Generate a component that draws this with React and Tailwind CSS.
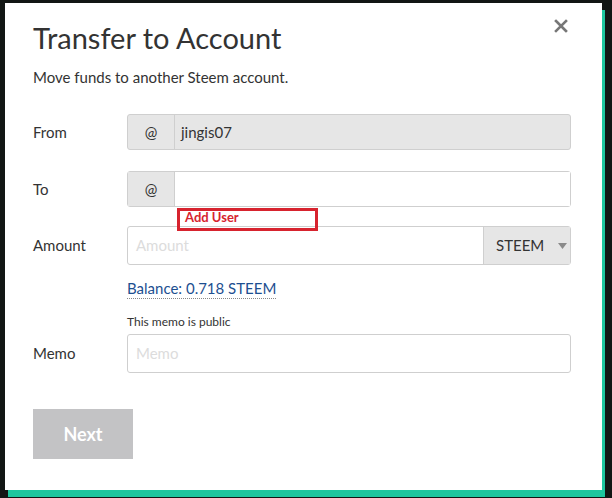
import React from 'react';

const font = { fontFamily: '"Lato", "Open Sans", sans-serif' };

function Row({ label, children, className = '' }) {
  return (
    <div className={`flex items-center ${className}`}>
      <div className="w-[94px] text-[15px] text-[#333]">{label}</div>
      <div className="relative w-[444px]">{children}</div>
    </div>
  );
}

export default function App() {
  return (
    <div className="w-[612px] h-[498px] overflow-hidden bg-[#121614] pl-[5px] pt-[3px]" style={font}>
      <div className="relative w-[597px] h-[487px] bg-white pl-[28px] pr-[31px] shadow-[3px_7px_0_0_#1ec69e]">
        <button className="absolute right-[34px] top-[16px] text-[#777]">
          <svg width="14" height="14" viewBox="0 0 14 14">
            <path d="M2 2 L12 12 M12 2 L2 12" stroke="currentColor" strokeWidth="2.6" strokeLinecap="square" />
          </svg>
        </button>

        <h1 className="pt-[17px] text-[29px] leading-[36px] text-[#333]">Transfer to Account</h1>
        <p className="mt-[11px] text-[15px] leading-[20px] text-[#333]">Move funds to another Steem account.</p>

        <Row label="From" className="mt-[27px]">
          <div className="flex h-[36px] rounded-[3px] border border-[#cfcfcf] bg-[#e6e6e6] text-[15px] text-[#333]">
            <div className="flex w-[47px] items-center justify-center border-r border-[#cfcfcf]">@</div>
            <div className="flex items-center pl-[6px]">jingis07</div>
          </div>
        </Row>

        <Row label="To" className="mt-[21px]">
          <div className="flex h-[36px] rounded-[3px] border border-[#cfcfcf] text-[15px] text-[#333]">
            <div className="flex w-[47px] items-center justify-center border-r border-[#cfcfcf] bg-[#e6e6e6]">@</div>
            <div className="flex-1 bg-white"></div>
          </div>
          <div className="absolute left-[50px] top-[37px] z-10 h-[23px] w-[141px] border-[3px] border-[#d7232e] pl-[5px] text-[13px] font-bold leading-[12px] text-[#d7232e]">
            Add User
          </div>
        </Row>

        <Row label="Amount" className="mt-[19px]">
          <div className="flex h-[39px] rounded-[3px] border border-[#cfcfcf] text-[15px]">
            <div className="flex flex-1 items-center pl-[8px] text-[#dcdcdc]">Amount</div>
            <div className="flex w-[87px] items-center border-l border-[#cfcfcf] bg-[#e6e6e6] pl-[12px] text-[#333]">
              <span>STEEM</span>
              <svg className="ml-[14px]" width="9" height="6" viewBox="0 0 9 6">
                <path d="M0 0 H9 L4.5 6 Z" fill="#8a8a8a" />
              </svg>
            </div>
          </div>
        </Row>

        <div className="ml-[94px] mt-[11px]">
          <span className="border-b border-dotted border-[#888] pb-[1px] text-[15px] leading-[20px] text-[#1d4f91]">Balance: 0.718 STEEM</span>
        </div>

        <div className="ml-[94px] mt-[14px] text-[12px] leading-[16px] text-[#333]">This memo is public</div>

        <Row label="Memo" className="mt-[4px]">
          <div className="flex h-[39px] items-center rounded-[3px] border border-[#cfcfcf] pl-[8px] text-[15px] text-[#dcdcdc]">
            Memo
          </div>
        </Row>

        <button className="mt-[36px] h-[50px] w-[100px] bg-[#c3c3c5] text-[18px] font-bold text-white">Next</button>
      </div>
    </div>
  );
}
